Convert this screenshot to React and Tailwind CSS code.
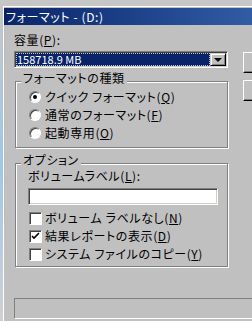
import React from 'react';

const font = "font-['Noto_Sans_CJK_JP','Noto_Sans',sans-serif] [font-feature-settings:'palt']";

const Key = ({ children }) => <span className="underline underline-offset-[1px]">{children}</span>;

const Radio = ({ checked, children }) => (
  <div className="flex h-[18px] items-center gap-[4px]">
    <span className="relative flex h-[12px] w-[12px] items-center justify-center rounded-full border border-t-[#808080] border-l-[#808080] border-r-white border-b-white bg-white shadow-[inset_1px_1px_0_#404040]">
      {checked && <span className="h-[4px] w-[4px] rounded-full bg-black" />}
    </span>
    <span className="leading-[14px]">{children}</span>
  </div>
);

const Check = ({ checked, children }) => (
  <div className="flex h-[18px] items-center gap-[3px]">
    <span className="flex h-[13px] w-[13px] items-center justify-center border border-t-[#808080] border-l-[#808080] border-r-white border-b-white bg-white shadow-[inset_1px_1px_0_#404040]">
      {checked && (
        <svg width="9" height="9" viewBox="0 0 9 9">
          <path d="M1 4 L3 6 L8 1" stroke="#000" strokeWidth="1.6" fill="none" />
        </svg>
      )}
    </span>
    <span className="leading-[14px]">{children}</span>
  </div>
);

const Group = ({ label, className, children }) => (
  <div className={`relative ml-[1px] w-[213px] border border-[#808080] shadow-[inset_1px_1px_0_#fff,1px_1px_0_#fff] ${className}`}>
    <span className="absolute -top-[11px] left-[5px] bg-[#c0c0c0] px-[2px] leading-[14px]">{label}</span>
    {children}
  </div>
);

const Button = () => (
  <div className="h-[21px] w-[75px] border border-t-white border-l-white border-r-black border-b-black bg-[#c0c0c0] shadow-[inset_-1px_-1px_0_#808080]" />
);

export default function App() {
  return (
    <div className={`flex h-[321px] w-[252px] flex-col overflow-hidden bg-[#c0c0c0] text-[12px] tracking-[0.6px] text-black ${font}`}>
      <div className="h-[6px] shrink-0 bg-[#c6c6c6]" />
      <div className="flex flex-1">
        <div className="w-[3px] shrink-0 bg-gradient-to-b from-[#c6c6c6] via-[#9ec6ee] to-[#d0d0d0]" />
        <div className="flex w-[330px] shrink-0 flex-col border-l border-t border-white">
          <div className="mt-[1px] flex h-[17px] items-center bg-gradient-to-r from-[#0a246a] to-[#3f70b8] pl-[2px] text-white">
            フォーマット - (D:)
          </div>

          <div className="flex pl-[10px]">
            <div className="flex w-[214px] flex-col">
              <div className="mt-[8px] leading-[14px]">容量(<Key>P</Key>):</div>

              <div className="mt-[4px] flex h-[17px] w-[214px] border border-t-[#808080] border-l-[#808080] border-r-white border-b-white shadow-[inset_1px_1px_0_#404040,inset_-1px_-1px_0_#d4d0c8]">
                <div className="m-[1px] mr-0 flex flex-1 items-center bg-[#0a246a] pl-[1px] text-[11px] tracking-normal text-white outline outline-1 outline-dotted outline-[#c0c0c0] -outline-offset-1">
                  158718.9 MB
                </div>
                <div className="m-[1px] ml-0 flex w-[16px] items-center justify-center border border-t-[#d4d0c8] border-l-[#d4d0c8] border-r-black border-b-black bg-[#c0c0c0] shadow-[inset_1px_1px_0_#fff,inset_-1px_-1px_0_#808080]">
                  <span className="h-0 w-0 border-l-[4px] border-r-[4px] border-t-[4px] border-l-transparent border-r-transparent border-t-black" />
                </div>
              </div>

              <Group label="フォーマットの種類" className="mt-[13px] h-[67px] pl-[13px] pt-[6px]">
                <Radio checked>クイック フォーマット(<Key>Q</Key>)</Radio>
                <Radio>通常のフォーマット(<Key>F</Key>)</Radio>
                <Radio>起動専用(<Key>O</Key>)</Radio>
              </Group>

              <Group label="オプション" className="mt-[15px] h-[104px] pl-[12px] pt-[5px]">
                <div className="leading-[14px]">ボリュームラベル(<Key>L</Key>):</div>
                <div className="mt-[5px] h-[17px] w-[190px] border border-t-[#808080] border-l-[#808080] border-r-white border-b-white bg-white shadow-[inset_1px_1px_0_#404040,inset_-1px_-1px_0_#d4d0c8]" />
                <div className="mt-[4px] pl-[1px]">
                  <Check>ボリューム ラベルなし(<Key>N</Key>)</Check>
                  <Check checked>結果レポートの表示(<Key>D</Key>)</Check>
                  <Check>システム ファイルのコピー(<Key>Y</Key>)</Check>
                </div>
              </Group>
            </div>

            <div className="ml-[15px] flex flex-col gap-[7px] pt-[27px]">
              <Button />
              <Button />
            </div>
          </div>

          <div className="ml-[10px] mt-[31px] h-[21px] w-[300px] border border-t-[#808080] border-l-[#808080] border-r-white border-b-white" />
        </div>
      </div>
    </div>
  );
}
